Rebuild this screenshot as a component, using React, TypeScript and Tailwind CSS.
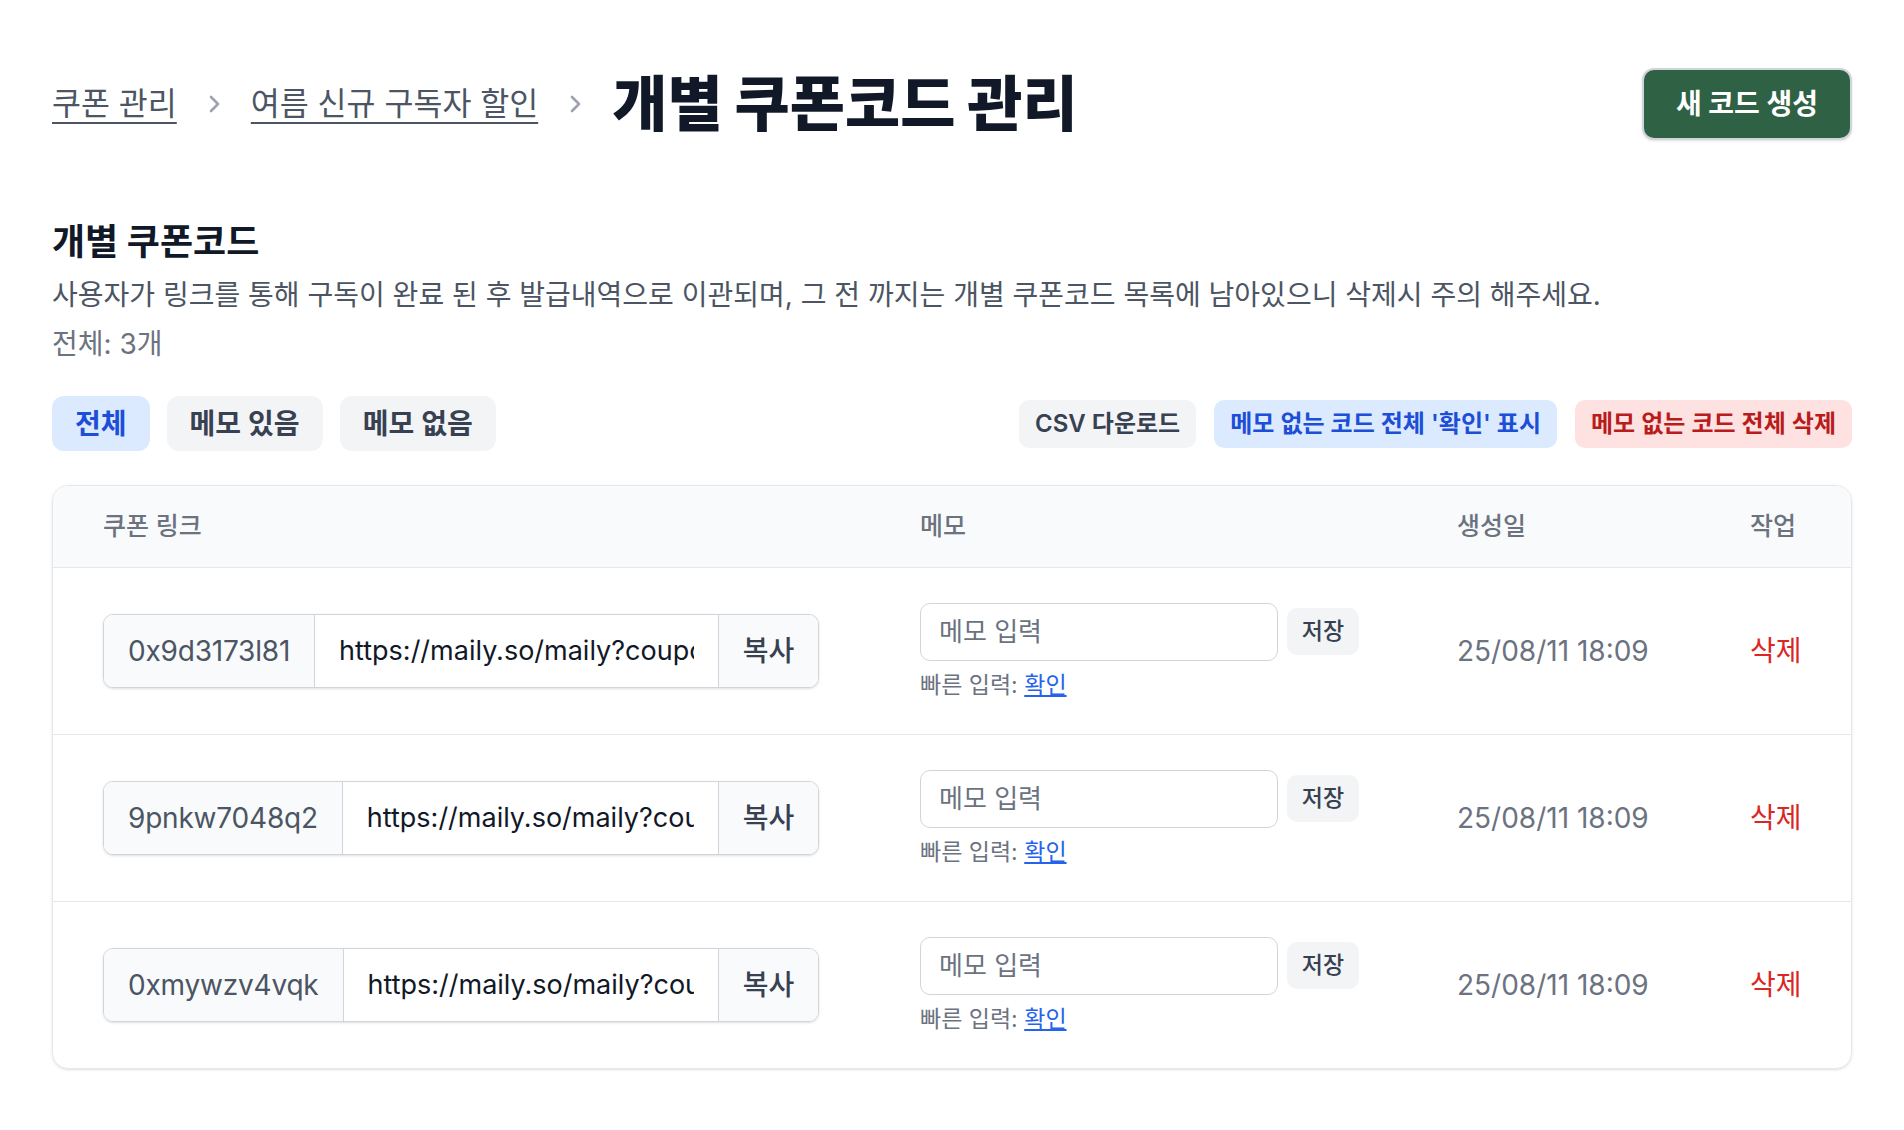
import { useState } from 'react';

type CouponCode = {
    code: string;
    url: string;
    createdAt: string;
};

const codes: CouponCode[] = [
    { code: '0x9d3173l81', url: 'https://maily.so/maily?coupon=0x9d3173l81', createdAt: '25/08/11 18:09' },
    { code: '9pnkw7048q2', url: 'https://maily.so/maily?coupon=9pnkw7048q2', createdAt: '25/08/11 18:09' },
    { code: '0xmywzv4vqk', url: 'https://maily.so/maily?coupon=0xmywzv4vqk', createdAt: '25/08/11 18:09' },
];

function Chevron() {
    return (
        <svg width="14" height="20" viewBox="0 0 14 20" fill="none" className="text-[#9ca3af]">
            <path d="M4 3l7 7-7 7" stroke="currentColor" strokeWidth="2.6" strokeLinecap="round" strokeLinejoin="round" />
        </svg>
    );
}

function CodeRow({ item }: { item: CouponCode }) {
    const [memo, setMemo] = useState('');

    return (
        <div className="grid grid-cols-[817px_537px_293px_1fr] items-center pl-[50px] h-[167px] border-t border-[#e5e7eb]">
            <div className="flex w-[716px] h-[74px] border border-[#d1d5db] rounded-[10px] overflow-hidden shadow-sm">
                <div className="flex items-center px-[24px] bg-[#f9fafb] text-[#4b5563] text-[28px] tracking-[-0.2px] border-r border-[#d1d5db]">
                    {item.code}
                </div>
                <input
                    readOnly
                    value={item.url}
                    className="flex-1 min-w-0 px-[24px] bg-white text-[#111827] text-[27px] outline-none"
                />
                <button className="w-[100px] shrink-0 bg-[#f9fafb] text-[#374151] text-[28px] font-medium border-l border-[#d1d5db]">
                    복사
                </button>
            </div>

            <div className="flex flex-col">
                <div className="flex items-center">
                    <input
                        value={memo}
                        onChange={(e) => setMemo(e.target.value)}
                        placeholder="메모 입력"
                        className="w-[358px] h-[58px] px-[18px] border border-[#d1d5db] rounded-[10px] text-[26px] text-[#111827] placeholder:text-[#6b7280] outline-none"
                    />
                    <button className="ml-[9px] w-[72px] h-[47px] bg-[#f3f4f6] rounded-[10px] text-[23px] font-medium text-[#374151]">
                        저장
                    </button>
                </div>
                <div className="mt-[9px] text-[23px] leading-[30px] text-[#6b7280]">
                    빠른 입력:{' '}
                    <button onClick={() => setMemo('확인')} className="text-[#2563eb] underline underline-offset-2">
                        확인
                    </button>
                </div>
            </div>

            <div className="text-[28px] text-[#6b7280]">{item.createdAt}</div>

            <div>
                <button className="text-[28px] text-[#dc2626]">삭제</button>
            </div>
        </div>
    );
}

export default function App() {
    const [filter, setFilter] = useState<'all' | 'with' | 'without'>('all');

    const tabs = [
        { key: 'all' as const, label: '전체' },
        { key: 'with' as const, label: '메모 있음' },
        { key: 'without' as const, label: '메모 없음' },
    ];

    return (
        <div className="min-h-screen bg-white font-['Inter','Noto_Sans_CJK_KR',sans-serif] px-[52px] pt-[68px] pb-[60px]">
            {/* header */}
            <div className="flex items-center justify-between h-[72px]">
                <div className="flex items-center gap-[30px]">
                    <a href="#" className="text-[31.5px] text-[#4b5563] underline underline-offset-[7px] decoration-2">
                        쿠폰 관리
                    </a>
                    <Chevron />
                    <a href="#" className="text-[31.5px] text-[#4b5563] underline underline-offset-[7px] decoration-2">
                        여름 신규 구독자 할인
                    </a>
                    <Chevron />
                    <h1 className="text-[60px] font-black text-[#111827] leading-none">개별 쿠폰코드 관리</h1>
                </div>
                <button className="h-[72px] px-[32px] bg-[#2f6245] text-white text-[28px] font-bold rounded-[12px] border-2 border-[#d1d5db] shadow-sm">
                    새 코드 생성
                </button>
            </div>

            {/* section intro */}
            <h2 className="mt-[82px] text-[36px] leading-[40px] font-bold text-[#111827]">개별 쿠폰코드</h2>
            <p className="mt-[15px] text-[28px] leading-[36px] text-[#4b5563]">
                사용자가 링크를 통해 구독이 완료 된 후 발급내역으로 이관되며, 그 전 까지는 개별 쿠폰코드 목록에 남아있으니 삭제시 주의 해주세요.
            </p>
            <p className="mt-[13px] text-[28px] leading-[36px] text-[#6b7280]">전체: {codes.length}개</p>

            {/* filters + bulk actions */}
            <div className="mt-[34px] flex items-center justify-between">
                <div className="flex gap-[17px]">
                    {tabs.map((t) => (
                        <button
                            key={t.key}
                            onClick={() => setFilter(t.key)}
                            className={
                                filter === t.key
                                    ? 'h-[55px] px-[23px] rounded-[12px] text-[28px] font-semibold bg-[#dbeafe] text-[#1d4ed8]'
                                    : 'h-[55px] px-[23px] rounded-[12px] text-[28px] font-semibold bg-[#f3f4f6] text-[#374151]'
                            }
                        >
                            {t.label}
                        </button>
                    ))}
                </div>
                <div className="flex gap-[18px]">
                    <button className="h-[48px] px-[16px] rounded-[10px] text-[24px] font-semibold bg-[#f3f4f6] text-[#374151]">
                        CSV 다운로드
                    </button>
                    <button className="h-[48px] px-[16px] rounded-[10px] text-[24px] font-semibold bg-[#dbeafe] text-[#1d4ed8]">
                        메모 없는 코드 전체 '확인' 표시
                    </button>
                    <button className="h-[48px] px-[16px] rounded-[10px] text-[24px] font-semibold bg-[#fee2e2] text-[#b91c1c]">
                        메모 없는 코드 전체 삭제
                    </button>
                </div>
            </div>

            {/* table */}
            <div className="mt-[34px] border border-[#e5e7eb] rounded-[16px] overflow-hidden shadow-sm">
                <div className="grid grid-cols-[817px_537px_293px_1fr] items-center pl-[50px] h-[81px] bg-[#f9fafb] text-[25px] font-medium text-[#6b7280]">
                    <div>쿠폰 링크</div>
                    <div>메모</div>
                    <div>생성일</div>
                    <div>작업</div>
                </div>
                {codes.map((c) => (
                    <CodeRow key={c.code} item={c} />
                ))}
            </div>
        </div>
    );
}
